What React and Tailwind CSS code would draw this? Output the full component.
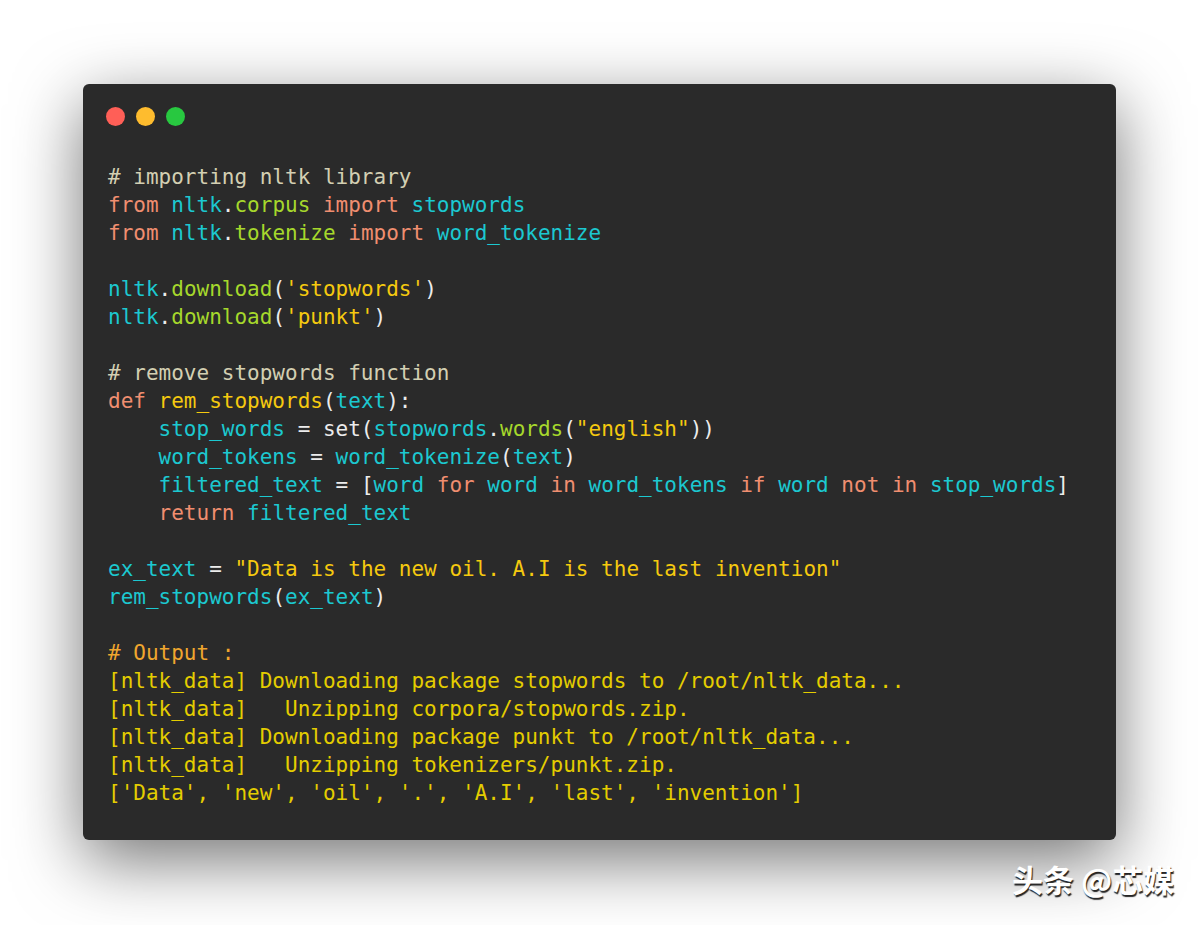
import React from "react";

const C = {
  c: "text-[#d3cfb2]",
  k: "text-[#f08e70]",
  v: "text-[#1cc8d0]",
  a: "text-[#a6d82c]",
  s: "text-[#f5c90f]",
  p: "text-[#ececec]",
  o: "text-[#f0a62e]",
  out: "text-[#e4cd00]",
};

const lines = [
  [["c", "# importing nltk library"]],
  [["k", "from "], ["v", "nltk"], ["p", "."], ["a", "corpus "], ["k", "import "], ["v", "stopwords"]],
  [["k", "from "], ["v", "nltk"], ["p", "."], ["a", "tokenize "], ["k", "import "], ["v", "word_tokenize"]],
  [],
  [["v", "nltk"], ["p", "."], ["a", "download"], ["p", "("], ["s", "'stopwords'"], ["p", ")"]],
  [["v", "nltk"], ["p", "."], ["a", "download"], ["p", "("], ["s", "'punkt'"], ["p", ")"]],
  [],
  [["c", "# remove stopwords function"]],
  [["k", "def "], ["s", "rem_stopwords"], ["p", "("], ["v", "text"], ["p", "):"]],
  [["p", "    "], ["v", "stop_words"], ["p", " = set("], ["v", "stopwords"], ["p", "."], ["a", "words"], ["p", "("], ["s", "\"english\""], ["p", "))"]],
  [["p", "    "], ["v", "word_tokens"], ["p", " = "], ["v", "word_tokenize"], ["p", "("], ["v", "text"], ["p", ")"]],
  [["p", "    "], ["v", "filtered_text"], ["p", " = ["], ["v", "word "], ["k", "for "], ["v", "word "], ["k", "in "], ["v", "word_tokens "], ["k", "if "], ["v", "word "], ["k", "not in "], ["v", "stop_words"], ["p", "]"]],
  [["p", "    "], ["k", "return "], ["v", "filtered_text"]],
  [],
  [["v", "ex_text"], ["p", " = "], ["s", "\"Data is the new oil. A.I is the last invention\""]],
  [["v", "rem_stopwords"], ["p", "("], ["v", "ex_text"], ["p", ")"]],
  [],
  [["o", "# Output :"]],
  [["out", "[nltk_data] Downloading package stopwords to /root/nltk_data..."]],
  [["out", "[nltk_data]   Unzipping corpora/stopwords.zip."]],
  [["out", "[nltk_data] Downloading package punkt to /root/nltk_data..."]],
  [["out", "[nltk_data]   Unzipping tokenizers/punkt.zip."]],
  [["out", "['Data', 'new', 'oil', '.', 'A.I', 'last', 'invention']"]],
];

export default function App() {
  return (
    <div className="relative h-[925px] w-[1200px] overflow-hidden bg-white pl-[83px] pt-[84px]">
      <div className="h-[756px] w-[1033px] rounded-[6px] bg-[#2a2a2a] pl-[23px] pt-[23px] shadow-[0_20px_68px_rgba(0,0,0,0.55)]">
        <div className="flex gap-[11px]">
          <span className="h-[19px] w-[19px] rounded-full bg-[#ff5f57]" />
          <span className="h-[19px] w-[19px] rounded-full bg-[#febc2e]" />
          <span className="h-[19px] w-[19px] rounded-full bg-[#28c840]" />
        </div>
        <pre className="mt-[37px] pl-[2px] font-['DejaVu_Sans_Mono',monospace] text-[21px] leading-[28px]">
          {lines.map((toks, i) => (
            <div key={i} className="h-[28px] whitespace-pre">
              {toks.map(([t, s], j) => (
                <span key={j} className={C[t]}>{s}</span>
              ))}
            </div>
          ))}
        </pre>
      </div>
      <div className="absolute left-[1012px] top-[858px] font-['Noto_Sans_CJK_SC',sans-serif] text-[31px] font-bold leading-[42px] text-white [text-shadow:1px_2px_1px_rgba(0,0,0,0.85)]">
        头条 @芯媒
      </div>
    </div>
  );
}
